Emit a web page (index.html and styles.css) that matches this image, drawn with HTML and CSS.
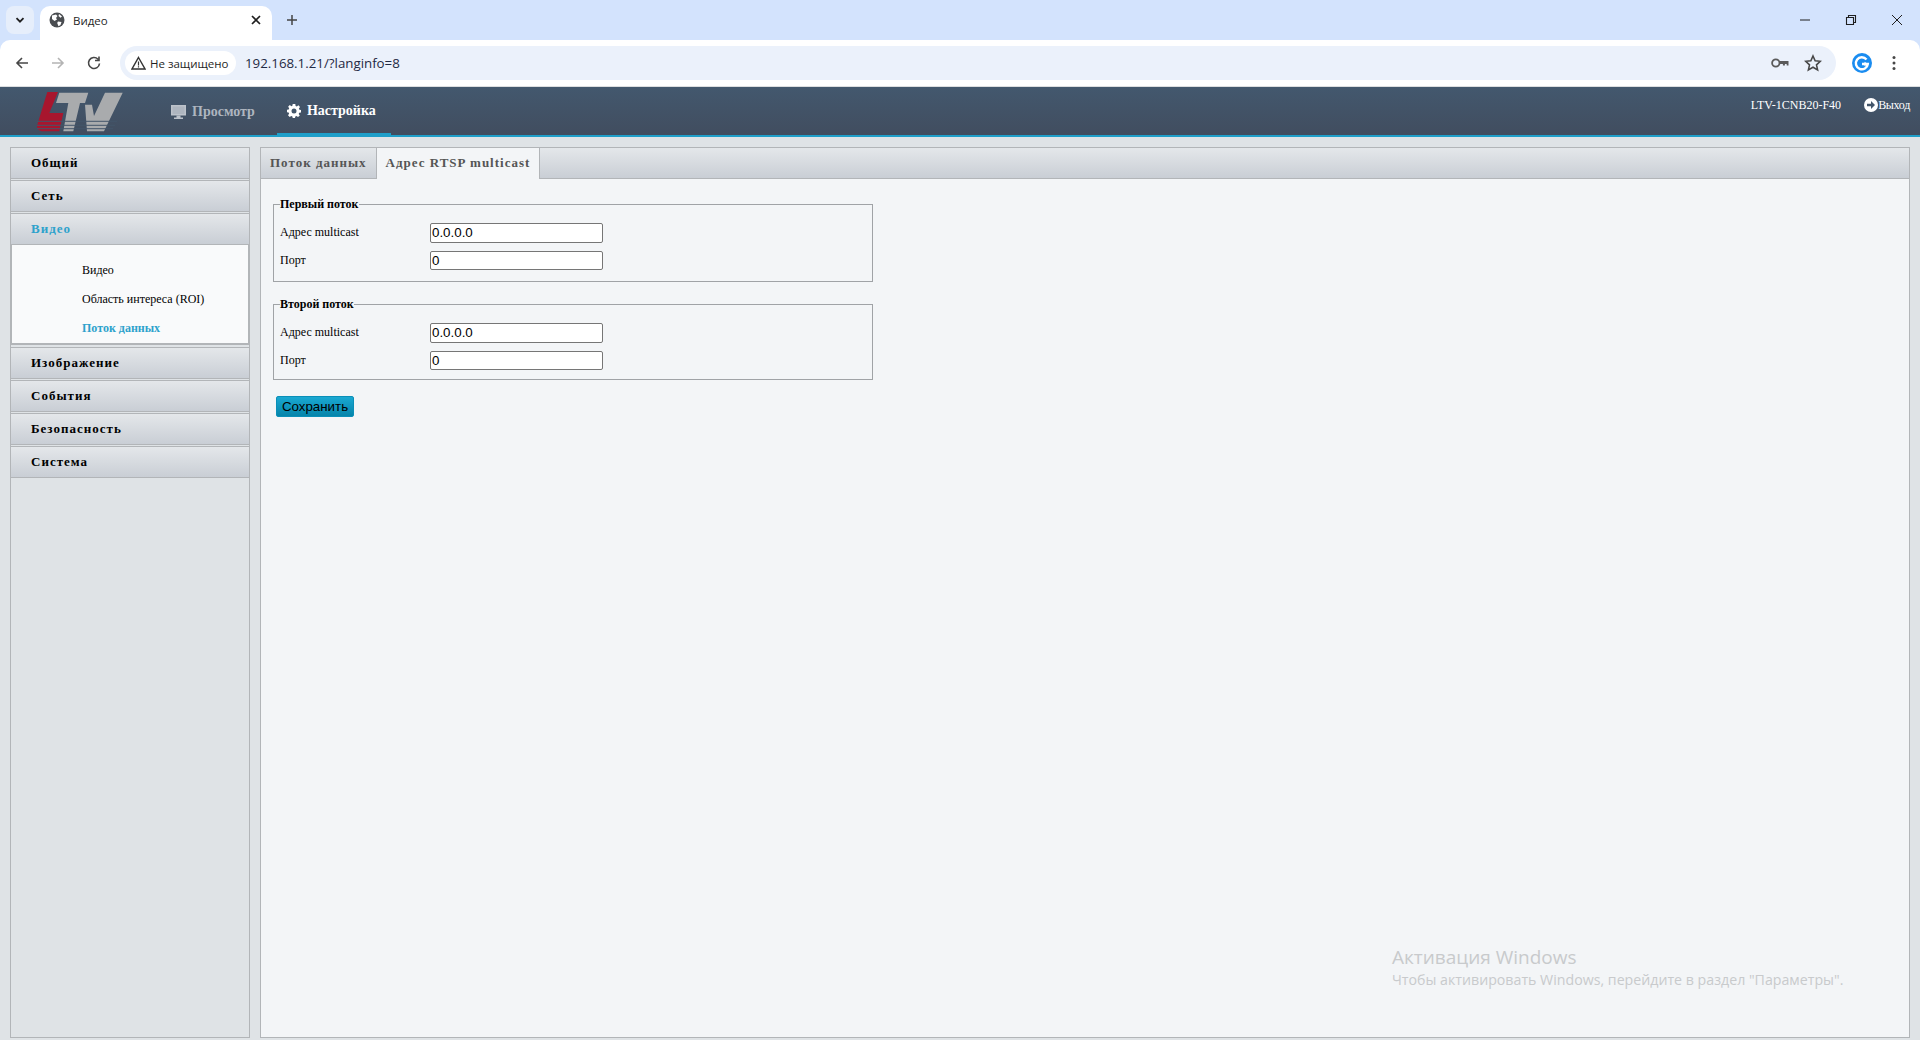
FILE: index.html
```html
<!DOCTYPE html>
<html lang="ru">
<head>
<meta charset="utf-8">
<title>Видео</title>
<link rel="stylesheet" href="styles.css">
</head>
<body>
<div class="browser">
  <div class="tabstrip">
    <div class="tabsearch"><svg width="12" height="12" viewBox="0 0 12 12"><path d="M2.5 4.2 6 7.7l3.5-3.5" fill="none" stroke="#1f1f1f" stroke-width="1.8"/></svg></div>
    <div class="tab">
      <svg class="favicon" width="16" height="16" viewBox="0 0 16 16"><circle cx="8" cy="8" r="7.5" fill="#4a4d51"/><path d="M3 3.5 7 2.5 8.5 4 7 6 8 7.5 5.5 9 3 7ZM9 9.5l3.5.5-1 3-2 1.2L8.2 11ZM10 2l3 2.5-1.5 1.2L9.5 4Z" fill="#fff"/></svg>
      <span class="tabtitle">Видео</span>
      <svg class="tabclose" width="10" height="10" viewBox="0 0 10 10"><path d="M1 1l8 8M9 1 1 9" stroke="#1f1f1f" stroke-width="1.7"/></svg>
    </div>
    <svg class="newtab" width="12" height="12" viewBox="0 0 12 12"><path d="M6 1v10M1 6h10" stroke="#444" stroke-width="1.5"/></svg>
    <div class="winctl">
      <svg width="12" height="12" viewBox="0 0 12 12"><path d="M1 6h10" stroke="#1f1f1f" stroke-width="1"/></svg>
      <svg width="12" height="12" viewBox="0 0 12 12"><path d="M1.500 3.500h7v7h-7zM3.500 3.500v-2h7v7h-2" fill="none" stroke="#1f1f1f" stroke-width="1.1"/></svg>
      <svg width="12" height="12" viewBox="0 0 12 12"><path d="M1 1l10 10M11 1 1 11" stroke="#1f1f1f" stroke-width="1"/></svg>
    </div>
  </div>
  <div class="toolbar">
    <svg class="navicon" width="16" height="16" viewBox="0 0 16 16"><path d="M14 8H3M8 3 3 8l5 5" fill="none" stroke="#474747" stroke-width="1.6"/></svg>
    <svg class="navicon" width="16" height="16" viewBox="0 0 16 16"><path d="M2 8h11M8 3l5 5-5 5" fill="none" stroke="#b4b4b4" stroke-width="1.6"/></svg>
    <svg class="navicon" width="16" height="16" viewBox="0 0 16 16"><path d="M13.500 8.500A5.500 5.500 0 1 1 12 4.200M13 1.500v4H9" fill="none" stroke="#474747" stroke-width="1.6"/></svg>
    <div class="omnibox">
      <div class="chip">
        <svg width="15" height="14" viewBox="0 0 15 14"><path d="M7.500 1.500 14 13H1Z" fill="none" stroke="#333" stroke-width="1.4"/><path d="M7.500 5.500v4M7.500 10.300v1.200" stroke="#333" stroke-width="1.2"/></svg>
        <span>Не защищено</span>
      </div>
      <span class="url">192.168.1.21/?langinfo=8</span>
      <svg class="omni-key" width="18" height="10" viewBox="0 0 18 10"><circle cx="4.800" cy="5" r="3.700" fill="none" stroke="#5a5a5a" stroke-width="1.800"/><path d="M8.500 3h9v4.500h-1.800V6h-1.800v1.500h-2V6H8.500Z" fill="#5a5a5a"/></svg>
      <svg class="omni-star" width="18" height="18" viewBox="0 0 16 16"><path d="M8 1.800 9.900 6l4.600.5-3.400 3.100 1 4.500L8 11.800l-4.100 2.300 1-4.500-3.400-3.100L6.100 6Z" fill="none" stroke="#474747" stroke-width="1.400"/></svg>
    </div>
    <svg class="gicon" width="20" height="20" viewBox="0 0 20 20"><circle cx="10" cy="10" r="10" fill="#1a8cf0"/><path d="M14.500 6.500A6 6 0 1 0 15.800 11H10" fill="none" stroke="#fff" stroke-width="2.400"/><path d="M12.500 13.200 16 11l-3.500-2.200" fill="#fff"/></svg>
    <svg class="menu" width="4" height="16" viewBox="0 0 4 16"><circle cx="2" cy="2.500" r="1.500" fill="#474747"/><circle cx="2" cy="8" r="1.500" fill="#474747"/><circle cx="2" cy="13.500" r="1.500" fill="#474747"/></svg>
  </div>
</div>

<header class="appbar">
  <svg class="logo" width="86" height="40" viewBox="0 0 86 40">
    <path d="M10.300 0H21L12.300 21H26.300L22.300 39.300H4.700Q-1 38 .3 32.700Z" fill="#a8162e"/>
    <path d="M22.300 .7H51.300L48 11H43L36.300 39.300H26.300L31.300 11H19Z" fill="#a9abad"/>
    <path d="M68 .7H85.700L67 39.300H50L48 12.700H55L57 24Z" fill="#a9abad"/>
    <path d="M0 29.300H80M0 33.300H78M0 36.700H76" stroke="#43566a" stroke-width="1"/>
  </svg>
  <nav class="topnav">
    <a class="toplink">
      <svg width="15" height="14" viewBox="0 0 15 14"><path d="M0 0h15v10.500H0Z" fill="#bcc2ca"/><path d="M1.500 1.500h12v7.500h-12Z" fill="#aeb5bf"/><path d="M5.500 10.500h4V12.500h2.500V14H3v-1.500h2.500Z" fill="#bcc2ca"/></svg>
      Просмотр
    </a>
    <a class="toplink active">
      <svg width="14" height="14" viewBox="0 0 14 14"><path d="M5.700 0h2.600l.3 1.900 1.200.5L11.400 1.300 13 3l-1.100 1.500.5 1.200 1.600.3v2.400l-1.800.3-.5 1.200L12.800 11.400 11 13l-1.500-1-1.200.5-.3 1.500H5.700l-.3-1.500-1.200-.5L2.700 13 1 11.300l1.100-1.500-.5-1.200L0 8.300V5.800l1.700-.3.500-1.200L1.100 2.800 2.800 1.100l1.600 1.100 1-.4Z" fill="#fff"/><circle cx="7" cy="7" r="2.500" fill="#43566a"/></svg>
      Настройка
    </a>
  </nav>
  <div class="devinfo">
    <span class="devname">LTV-1CNB20-F40</span>
    <a class="logout">
      <svg width="14" height="14" viewBox="0 0 14 14"><circle cx="7" cy="7" r="7" fill="#fff"/><path d="M3 5.800h4V3l4 4-4 4V8.200H3Z" fill="#43566a"/></svg>Выход
    </a>
  </div>
</header>

<main class="workspace">
  <aside class="sidebar">
    <div class="acc">Общий</div>
    <div class="acc">Сеть</div>
    <div class="acc acc-open current">Видео</div>
    <ul class="submenu">
      <li>Видео</li>
      <li>Область интереса (ROI)</li>
      <li class="current">Поток данных</li>
    </ul>
    <div class="acc">Изображение</div>
    <div class="acc">События</div>
    <div class="acc">Безопасность</div>
    <div class="acc">Система</div>
  </aside>

  <section class="panel">
    <div class="tabs">
      <div class="ptab">Поток данных</div>
      <div class="ptab selected">Адрес RTSP multicast</div>
    </div>
    <form class="panel-body">
      <fieldset class="group">
        <legend>Первый поток</legend>
        <div class="row"><label>Адрес multicast</label><input value="0.0.0.0"></div>
        <div class="row"><label>Порт</label><input value="0"></div>
      </fieldset>
      <fieldset class="group">
        <legend>Второй поток</legend>
        <div class="row"><label>Адрес multicast</label><input value="0.0.0.0"></div>
        <div class="row"><label>Порт</label><input value="0"></div>
      </fieldset>
      <button type="button" class="save">Сохранить</button>
    </form>
  </section>
</main>

<div class="watermark">
  <div class="wm-title">Активация Windows</div>
  <div class="wm-text">Чтобы активировать Windows, перейдите в раздел "Параметры".</div>
</div>
</body>
</html>
```
FILE: styles.css
```css
* { box-sizing: border-box; }
html, body { margin: 0; height: 1040px; overflow: hidden; }
body { background: #dfe3e6; font-family: "Liberation Serif", serif; font-size: 12px; color: #000; position: relative; }

.browser { height: 87px; background: #d3e3fd; border-bottom: 1px solid #dcdee0; font-family: "Open Sans", "Noto Sans", sans-serif; }
.tabstrip { height: 40px; display: flex; align-items: flex-start; padding: 6px 0 0 6px; }
.tabsearch { width: 28px; height: 28px; border-radius: 8px; background: #e6eefb; display: flex; align-items: center; justify-content: center; }
.tab { width: 232px; height: 34px; margin-left: 6px; background: #fff; border-radius: 10px 10px 0 0; display: flex; align-items: center; padding: 0 11px 6px 9px; }
.tabtitle { margin-left: 8px; font-size: 11.500px; color: #1f1f1f; flex: 1; }
.newtab { margin: 8px 0 0 14px; }
.winctl { margin-left: auto; display: flex; gap: 34px; padding: 8px 17px 0 0; }
.toolbar { height: 46px; background: #fff; border-radius: 10px 10px 0 0; display: flex; align-items: center; padding: 0 11px 0 14px; }
.navicon { margin-right: 20px; flex: none; }
.omnibox { width: 1716px; margin-left: -2px; height: 34px; border-radius: 17px; background: #ebf1fb; display: flex; align-items: center; padding: 0 14px 0 5px; }
.chip { height: 24px; width: 111px; background: #fff; border-radius: 12px; display: flex; align-items: center; gap: 4px; padding-left: 6px; font-size: 11.500px; color: #1f1f1f; }
.url { margin-left: 9px; font-size: 13.300px; color: #1f2a44; flex: 1; }
.omni-key { margin-right: 15px; }
.gicon { margin-left: 16px; flex: none; }
.menu { margin-left: 20px; flex: none; }

.appbar { height: 50px; background: linear-gradient(#43586e, #414d5f) no-repeat; background-size: 100% 48px; border-bottom: 2px solid #1f9fc9; display: flex; align-items: flex-start; padding-left: 37px; color: #fff; }
.logo { margin-top: 5px; flex: none; }
.topnav { display: flex; margin-left: 48px; }
.toplink { height: 48px; padding-top: 2px; display: flex; align-items: center; gap: 6px; margin-right: 22px; font-weight: bold; font-size: 14px; color: #aeb5bf; }
.toplink.active { color: #fff; width: 114px; padding-left: 10px; margin: 0; border-bottom: 2px solid #1f9fc9; }
.devinfo { margin-left: auto; display: flex; align-items: center; height: 36px; padding-right: 10px; font-size: 12px; }
.devname { margin-right: 23px; }
.logout { display: flex; align-items: center; font-size: 12px; letter-spacing: -.3px; }

.workspace { display: flex; gap: 10px; padding: 10px 10px 2px; height: 903px; }
.sidebar { width: 240px; border: 1px solid #b2b5b8; border-top: 0; background: #dfe3e6; flex: none; }
.acc { height: 32px; margin: 0 -1px 1px; border: 1px solid #b2b5b8; background: linear-gradient(#e4e7ea, #c9ced5); padding-left: 20px; line-height: 29px; font-weight: bold; font-size: 13px; letter-spacing: 1px; }
.acc-open { height: 31px; margin-bottom: 0; border-bottom: 0; }
.current { color: #2da2cc; }
.submenu { list-style: none; margin: 0 0 2px -1px; width: 240px; height: 101px; padding: 11px 0 0 70px; background: #f9fafb; border: 2px solid #b2b5b8; border-top: 1px solid #b2b5b8; }
.submenu li { height: 29px; line-height: 28px; }
.submenu li.current { font-weight: bold; }

.panel { flex: 1; border: 1px solid #b2b5b8; background: #f3f5f7; }
.tabs { height: 31px; display: flex; background: linear-gradient(#e4e7ea, #c9ced5); border-bottom: 1px solid #b2b5b8; }
.ptab { height: 30px; padding: 0 9px 0 9px; line-height: 29px; font-weight: bold; font-size: 13px; letter-spacing: 1px; color: #555; }
.ptab.selected { height: 31px; background: #f3f5f7; border-left: 1px solid #b2b5b8; border-right: 1px solid #b2b5b8; }
.panel-body { padding: 18px 0 0 12px; }
.group { width: 600px; height: 85px; margin: 0 0 15px; padding: 8px 6px 0; border: 1px solid #a0a3a6; min-width: 0; }
.group + .group { height: 83px; margin-bottom: 16px; }
.group legend { padding: 0; font-weight: bold; font-size: 12px; line-height: 14px; }
.row { display: flex; align-items: center; height: 27.500px; }
.row label { width: 150px; }
.row input { width: 173px; height: 19.500px; padding: 0 1px; font: 13.333px "Liberation Sans", sans-serif; border: 1px solid #767676; border-radius: 2px; background: #fff; color: #000; }
.save { display: block; margin-left: 3px; width: 78px; height: 21px; padding: 0; border: 1px solid #0a8fb8; border-radius: 2px; background: linear-gradient(#1aa8d2, #0584aa); font: 13.333px "Liberation Sans", sans-serif; color: #000; }

.watermark { position: absolute; left: 1392px; top: 945px; color: #c8cacc; font-family: "Open Sans", "Noto Sans", sans-serif; }
.wm-title { font-size: 19px; line-height: 25px; }
.wm-text { font-size: 14.200px; line-height: 19px; }
```
